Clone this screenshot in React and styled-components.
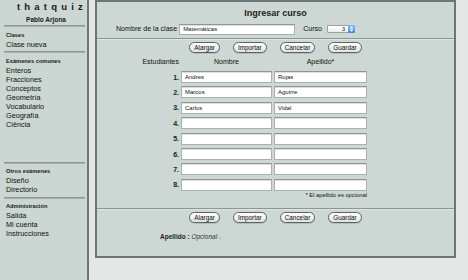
import React from "react"
import styled, { createGlobalStyle } from "styled-components"

const Global = createGlobalStyle`
  body {
    margin: 0;
    background: #e3e8e6;
    font-family: "Liberation Sans", Arial, sans-serif;
    color: #111;
  }
`

const menu = [
  { title: "Clases", items: ["Clase nueva"] },
  {
    title: "Exámenes comunes",
    items: ["Enteros", "Fracciones", "Conceptos", "Geometría", "Vocabulario", "Geografía", "Ciência"],
  },
  { title: "Otros exámenes", items: ["Diseño", "Directorio"], gap: true },
  { title: "Administración", items: ["Salida", "Mi cuenta", "Instrucciones"] },
]

const students = [
  ["Andres", "Rojas"],
  ["Marcos", "Aguirre"],
  ["Carlos", "Vidal"],
  ["", ""],
  ["", ""],
  ["", ""],
  ["", ""],
  ["", ""],
]

const buttons = ["Alargar", "Importar", "Cancelar", "Guardar"]

const Page = styled.div`
  display: flex;
  align-items: flex-start;
  height: 280px;
  overflow: hidden;
`

const Sidebar = styled.div`
  width: 87px;
  height: 280px;
  flex-shrink: 0;
  background: #ccd6d3;
  border-right: 2px solid #6d7674;
`

const Brand = styled.div`
  margin-top: 2px;
  padding-left: 17px;
  text-align: center;
  font-size: 9.5px;
  line-height: 10px;
  font-weight: bold;
  letter-spacing: 4.2px;
  color: #1a1a1a;
`

const Owner = styled.div`
  margin-top: 3.5px;
  padding-left: 5px;
  text-align: center;
  font-size: 6.5px;
  line-height: 7px;
  font-weight: bold;
  color: #1a1a1a;
`

const Section = styled.div`
  margin-top: ${({ $gap }) => ($gap ? "33px" : "0")};
`

const Rule = styled.div`
  margin: 2.5px 2px 0 4px;
  height: 1px;
  background: #8c9693;
  border-bottom: 1px solid #a8b1ae;
`

const SectionTitle = styled.div`
  padding: 3.5px 0 0 6px;
  font-size: 5.7px;
  line-height: 9px;
  font-weight: bold;
  color: #1a1a1a;
`

const MenuItem = styled.div`
  padding-left: 6px;
  font-size: 7.3px;
  line-height: 9px;
  color: #111;
`

const Panel = styled.div`
  margin-left: 6px;
  width: 357px;
  height: 254px;
  flex-shrink: 0;
  background: #cdd7d4;
  border: 2px solid #6d7674;
  display: flex;
  flex-direction: column;
`

const Heading = styled.div`
  margin-top: 6px;
  text-align: center;
  font-size: 9px;
  line-height: 11px;
  font-weight: bold;
  color: #222;
`

const ClassRow = styled.div`
  margin-top: 4px;
  padding-left: 19px;
  display: flex;
  align-items: center;
  height: 12px;
`

const Label = styled.span`
  font-size: 7.1px;
  color: #111;
  margin-right: 2px;
`

const Field = styled.div`
  width: ${({ $w }) => $w}px;
  height: ${({ $h }) => $h || 11}px;
  box-sizing: border-box;
  background: #fff;
  border: 1px solid #a9b0ae;
  border-top-color: #8f9794;
  box-shadow: inset 0 1px 0 #dcdfde;
  font-size: 6px;
  line-height: ${({ $h }) => ($h || 11) - 2}px;
  padding-left: 3px;
  color: #111;
  margin-right: ${({ $space }) => $space || 0}px;
`

const Select = styled.div`
  width: 28px;
  height: 8px;
  margin-left: 3px;
  box-sizing: border-box;
  border: 1px solid #9aa19f;
  background: linear-gradient(#ffffff, #eceeee);
  display: flex;
  align-items: center;
  font-size: 5.5px;
  border-radius: 1px;
`

const SelectValue = styled.span`
  flex: 1;
  text-align: right;
  padding-right: 3px;
`

const Stepper = styled.div`
  width: 7px;
  height: 8px;
  margin-right: -1px;
  border-radius: 1px;
  background: linear-gradient(#8cc0f0, #3f87dd);
  display: flex;
  align-items: center;
  justify-content: center;
`

const Divider = styled.div`
  margin-top: ${({ $m }) => $m}px;
  height: 1px;
  background: #8c9693;
  border-bottom: 1px solid #dfe5e3;
`

const ButtonRow = styled.div`
  display: flex;
  justify-content: center;
  gap: 13px;
  margin-top: ${({ $m }) => $m}px;
`

const Button = styled.div`
  height: 9px;
  padding: 0 4px;
  border: 1px solid #5b6261;
  border-radius: 6px;
  background: linear-gradient(#ffffff, #dfe2e2);
  font-size: 6.4px;
  line-height: 9px;
  color: #111;
  box-shadow: 0 0.5px 0 #9aa3a1;
`

const Table = styled.div`
  margin: 1px 0 0 40px;
  display: grid;
  grid-template-columns: 42px 91px 93px;
  column-gap: 2px;
  grid-auto-rows: 15.4px;
  align-items: center;
`

const HeadCell = styled.div`
  font-size: 7px;
  text-align: ${({ $align }) => $align || "center"};
  color: #111;
`

const Num = styled.div`
  font-size: 7px;
  font-weight: bold;
  text-align: right;
  color: #222;
`

const Footnote = styled.div`
  margin: -1px 0 0 40px;
  width: 230px;
  text-align: right;
  font-size: 5.8px;
  line-height: 7px;
  color: #111;
`

const Note = styled.div`
  margin: 10px 0 0 63px;
  font-size: 6.5px;
  color: #222;
  b {
    font-weight: bold;
  }
  i {
    color: #333;
  }
`

const Arrows = () => (
  <svg width="5" height="6" viewBox="0 0 5 6">
    <path d="M2.5 0.3 L4.4 2.4 H0.6 Z M2.5 5.7 L4.4 3.6 H0.6 Z" fill="#fff" />
  </svg>
)

const Buttons = ({ m }) => (
  <ButtonRow $m={m}>
    {buttons.map((b) => (
      <Button key={b}>{b}</Button>
    ))}
  </ButtonRow>
)

export default function App() {
  return (
    <Page>
      <Global />
      <Sidebar>
        <Brand>thatquiz</Brand>
        <Owner>Pablo Arjona</Owner>
        {menu.map((s) => (
          <Section key={s.title} $gap={s.gap}>
            <Rule />
            <SectionTitle>{s.title}</SectionTitle>
            {s.items.map((it) => (
              <MenuItem key={it}>{it}</MenuItem>
            ))}
          </Section>
        ))}
      </Sidebar>
      <Panel>
        <Heading>Ingresar curso</Heading>
        <ClassRow>
          <Label>Nombre de la clase</Label>
          <Field $w={116} $space={8}>Matemáticas</Field>
          <Label>Curso</Label>
          <Select>
            <SelectValue>3</SelectValue>
            <Stepper>
              <Arrows />
            </Stepper>
          </Select>
        </ClassRow>
        <Divider $m={3} />
        <Buttons m={2} />
        <Table>
          <HeadCell $align="right">Estudiantes</HeadCell>
          <HeadCell>Nombre</HeadCell>
          <HeadCell>Apellido*</HeadCell>
          {students.map(([n, a], i) => (
            <React.Fragment key={i}>
              <Num>{i + 1}.</Num>
              <Field $w={91} $h={12}>{n}</Field>
              <Field $w={93} $h={12}>{a}</Field>
            </React.Fragment>
          ))}
        </Table>
        <Footnote>* El apellido es opcional</Footnote>
        <Divider $m={9} />
        <Buttons m={2} />
        <Note>
          <b>Apellido :</b> <i>Opcional</i> .
        </Note>
      </Panel>
    </Page>
  )
}
